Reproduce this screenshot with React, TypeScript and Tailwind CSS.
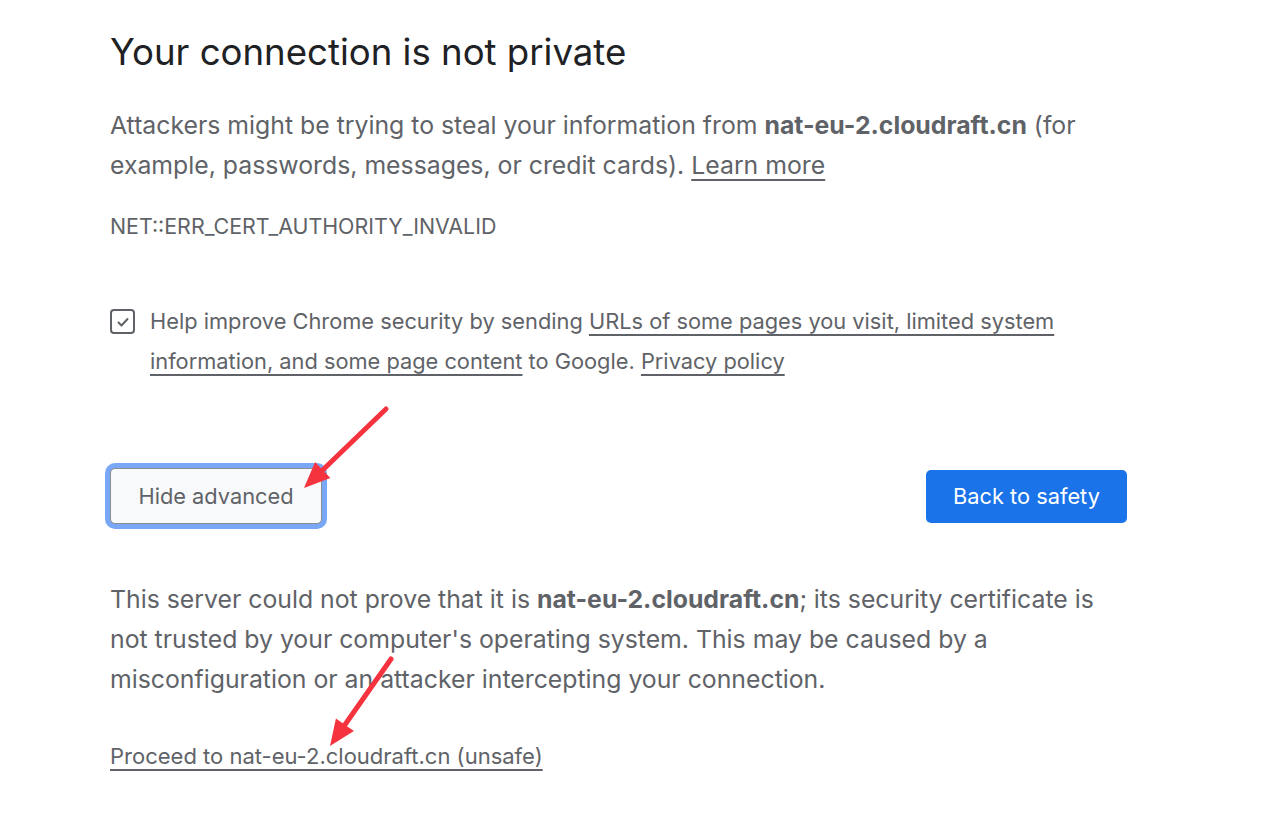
import React from 'react';

const Arrow = ({ x1, y1, x2, y2 }: { x1: number; y1: number; x2: number; y2: number }) => {
  const ang = Math.atan2(y2 - y1, x2 - x1);
  const len = 26;
  const w = 11;
  const bx = x2 - Math.cos(ang) * len;
  const by = y2 - Math.sin(ang) * len;
  const px = -Math.sin(ang);
  const py = Math.cos(ang);
  const head = `${x2},${y2} ${bx + px * w},${by + py * w} ${bx - px * w},${by - py * w}`;
  return (
    <g>
      <line x1={x1} y1={y1} x2={bx} y2={by} stroke="#f5333f" strokeWidth={5} strokeLinecap="round" />
      <polygon points={head} fill="#f5333f" />
    </g>
  );
};

export default function App() {
  return (
    <div
      className="relative w-[1280px] h-[823px] bg-white overflow-hidden"
      style={{ fontFamily: 'Inter, "Noto Sans", sans-serif' }}
    >
      <div className="w-[1017px] ml-[110px] pt-[30px] text-[#5f6368]">
        <h1 className="text-[36.6px] leading-[44px] text-[#202124] font-normal">
          Your connection is not private
        </h1>

        <p className="mt-[31px] text-[24.8px] leading-[40px]">
          Attackers might be trying to steal your information from{' '}
          <b className="font-bold">nat-eu-2.cloudraft.cn</b> (for example, passwords, messages, or credit cards).{' '}
          <span className="underline underline-offset-[5px]">Learn more</span>
        </p>

        <div className="mt-[26px] text-[21.4px] leading-[30px]">NET::ERR_CERT_AUTHORITY_INVALID</div>

        <div className="mt-[60px] flex items-start gap-[16px]">
          <div className="mt-[8px] w-[25px] h-[25px] shrink-0 rounded-[4px] border-2 border-[#5f6368] flex items-center justify-center">
            <svg width="16" height="16" viewBox="0 0 16 16" fill="none">
              <path d="M3.5 8.5l3 3 6-6.5" stroke="#5f6368" strokeWidth="2" strokeLinecap="round" strokeLinejoin="round" />
            </svg>
          </div>
          <p className="-ml-[1px] text-[21.8px] leading-[40px]">
            Help improve Chrome security by sending{' '}
            <span className="underline underline-offset-[5px]">
              URLs of some pages you visit, limited system information, and some page content
            </span>{' '}
            to Google. <span className="underline underline-offset-[5px]">Privacy policy</span>
          </p>
        </div>

        <div className="mt-[87px] flex items-center justify-between">
          <button className="w-[212px] h-[56px] rounded-[5px] border border-[#8a8d91] bg-[#f8f9fa] text-[21.8px] text-[#5f6368] ring-[5px] ring-[#7aa7f5] flex items-center justify-center">
            Hide advanced
          </button>
          <button className="w-[201px] h-[53px] rounded-[5px] bg-[#1a73e8] text-white text-[21.8px] flex items-center justify-center">
            Back to safety
          </button>
        </div>

        <p className="mt-[55px] text-[24.8px] leading-[40px]">
          This server could not prove that it is <b className="font-bold">nat-eu-2.cloudraft.cn</b>; its security
          certificate is not trusted by your computer's operating system. This may be caused by a misconfiguration or
          an attacker intercepting your connection.
        </p>

        <div className="mt-[42px] text-[22px] leading-[30px]">
          <span className="underline underline-offset-[5px]">Proceed to nat-eu-2.cloudraft.cn (unsafe)</span>
        </div>
      </div>

      <svg className="absolute inset-0 pointer-events-none" width="1280" height="823">
        <Arrow x1={386} y1={409} x2={304} y2={488} />
        <Arrow x1={391} y1={659} x2={330} y2={746} />
      </svg>
    </div>
  );
}
